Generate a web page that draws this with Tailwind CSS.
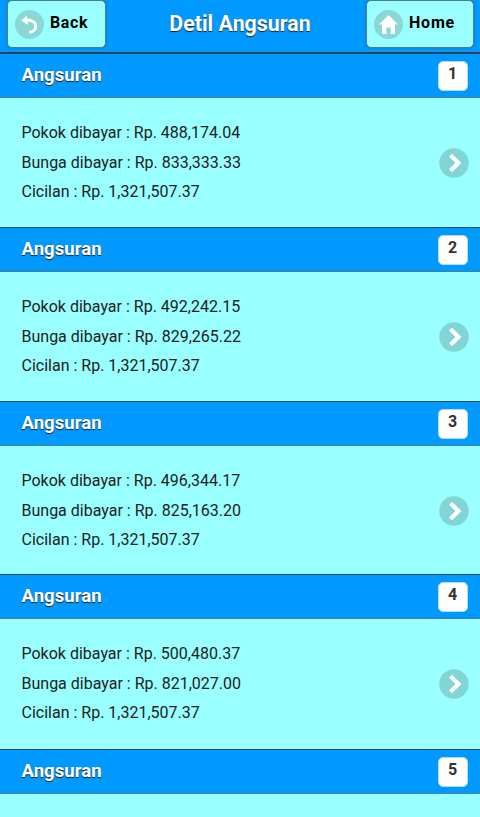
<!DOCTYPE html>
<html lang="id">
<head>
  <meta charset="UTF-8">
  <meta name="viewport" content="width=device-width, initial-scale=1.0">
  <title>Detil Angsuran</title>
  <script src="https://cdn.jsdelivr.net/npm/@tailwindcss/browser@4"></script>
</head>
<body class="h-screen overflow-hidden bg-[#99ffff] font-['Roboto',sans-serif] text-[#222]">
  <!-- Header -->
  <header class="flex h-[54px] items-start justify-between border-b-2 border-[#2b3f4c] bg-[#0099ff] pl-[7px] pr-[6px]">
    <a class="flex h-12 w-[99px] items-center rounded-[5px] border border-[#4a7f88] bg-[#99ffff] pl-[7px] shadow-[0_0_2px_#35607c]">
      <svg class="size-[29px] shrink-0" viewBox="0 0 29 29">
        <circle cx="14.5" cy="14.5" r="14.5" fill="#8ad8d6"/>
        <path d="M11 10.3C16.5 9.8 20.8 12 20.8 16.2C20.8 19.6 18.5 21.8 14.2 22.4" fill="none" stroke="#fff" stroke-width="2.8"/>
        <path d="M6.2 10.6L11.8 5.8L13 15Z" fill="#fff"/>
      </svg>
      <span class="-mt-[3px] ml-[6px] text-base font-bold tracking-[.6px] text-black">Back</span>
    </a>
    <h1 class="mt-[10px] pl-[8px] text-[21.4px] leading-7 font-bold text-white [text-shadow:0_1px_1px_#222]">Detil Angsuran</h1>
    <a class="flex h-12 w-[108px] items-center rounded-[5px] border border-[#4a7f88] bg-[#99ffff] pl-[7px] shadow-[0_0_2px_#35607c]">
      <svg class="size-[29px] shrink-0" viewBox="0 0 29 29">
        <circle cx="14.5" cy="14.5" r="14.5" fill="#8ad8d6"/>
        <path d="M14.5 5L5 14.5H8V24H12.3V17.5H16.7V24H21V14.5H24Z" fill="#fff"/>
      </svg>
      <span class="-mt-[3px] ml-[6px] text-base font-bold tracking-[.8px] text-black">Home</span>
    </a>
  </header>

  <!-- Installments -->
  <main id="angsuran-list" class="-mt-px"></main>

  <script>
    const angsuran = [
      { no: 1, tinggi: 174, pokok: '488,174.04', bunga: '833,333.33', cicilan: '1,321,507.37' },
      { no: 2, tinggi: 174, pokok: '492,242.15', bunga: '829,265.22', cicilan: '1,321,507.37' },
      { no: 3, tinggi: 173, pokok: '496,344.17', bunga: '825,163.20', cicilan: '1,321,507.37' },
      { no: 4, tinggi: 175, pokok: '500,480.37', bunga: '821,027.00', cicilan: '1,321,507.37' },
      { no: 5, tinggi: 68 }
    ];

    const list = document.getElementById('angsuran-list');
    angsuran.forEach(item => {
      const detail = item.pokok ? `
          <div class="flex h-[129px] items-center justify-between pl-[21.5px] pr-[11px]">
            <div class="text-base leading-[29.5px]">
              <p>Pokok dibayar : Rp. ${item.pokok}</p>
              <p>Bunga dibayar : Rp. ${item.bunga}</p>
              <p>Cicilan : Rp. ${item.cicilan}</p>
            </div>
            <svg class="size-[30px]" viewBox="0 0 30 30">
              <circle cx="15" cy="15" r="14.7" fill="#82d5d5"/>
              <path d="M11.5 7.2L19.5 15L11.5 22.8" fill="none" stroke="#fff" stroke-width="4.2"/>
            </svg>
          </div>` : '';
      list.innerHTML += `
        <section style="height: ${item.tinggi}px">
          <div class="flex h-[45px] items-center justify-between border-t border-b border-t-[#26495c] border-b-[#4c7f92] bg-[#0099ff] pl-[21.5px] pr-[12.5px]">
            <h2 class="-mt-[2px] text-[18.6px] leading-7 font-bold text-white [text-shadow:0_1px_1px_#222]">Angsuran</h2>
            <span class="flex size-[30px] justify-center rounded-[5px] border border-[#b5dcf5] bg-white text-base font-bold text-[#333]">${item.no}</span>
          </div>${detail}
        </section>
      `;
    });
  </script>
</body>
</html>
